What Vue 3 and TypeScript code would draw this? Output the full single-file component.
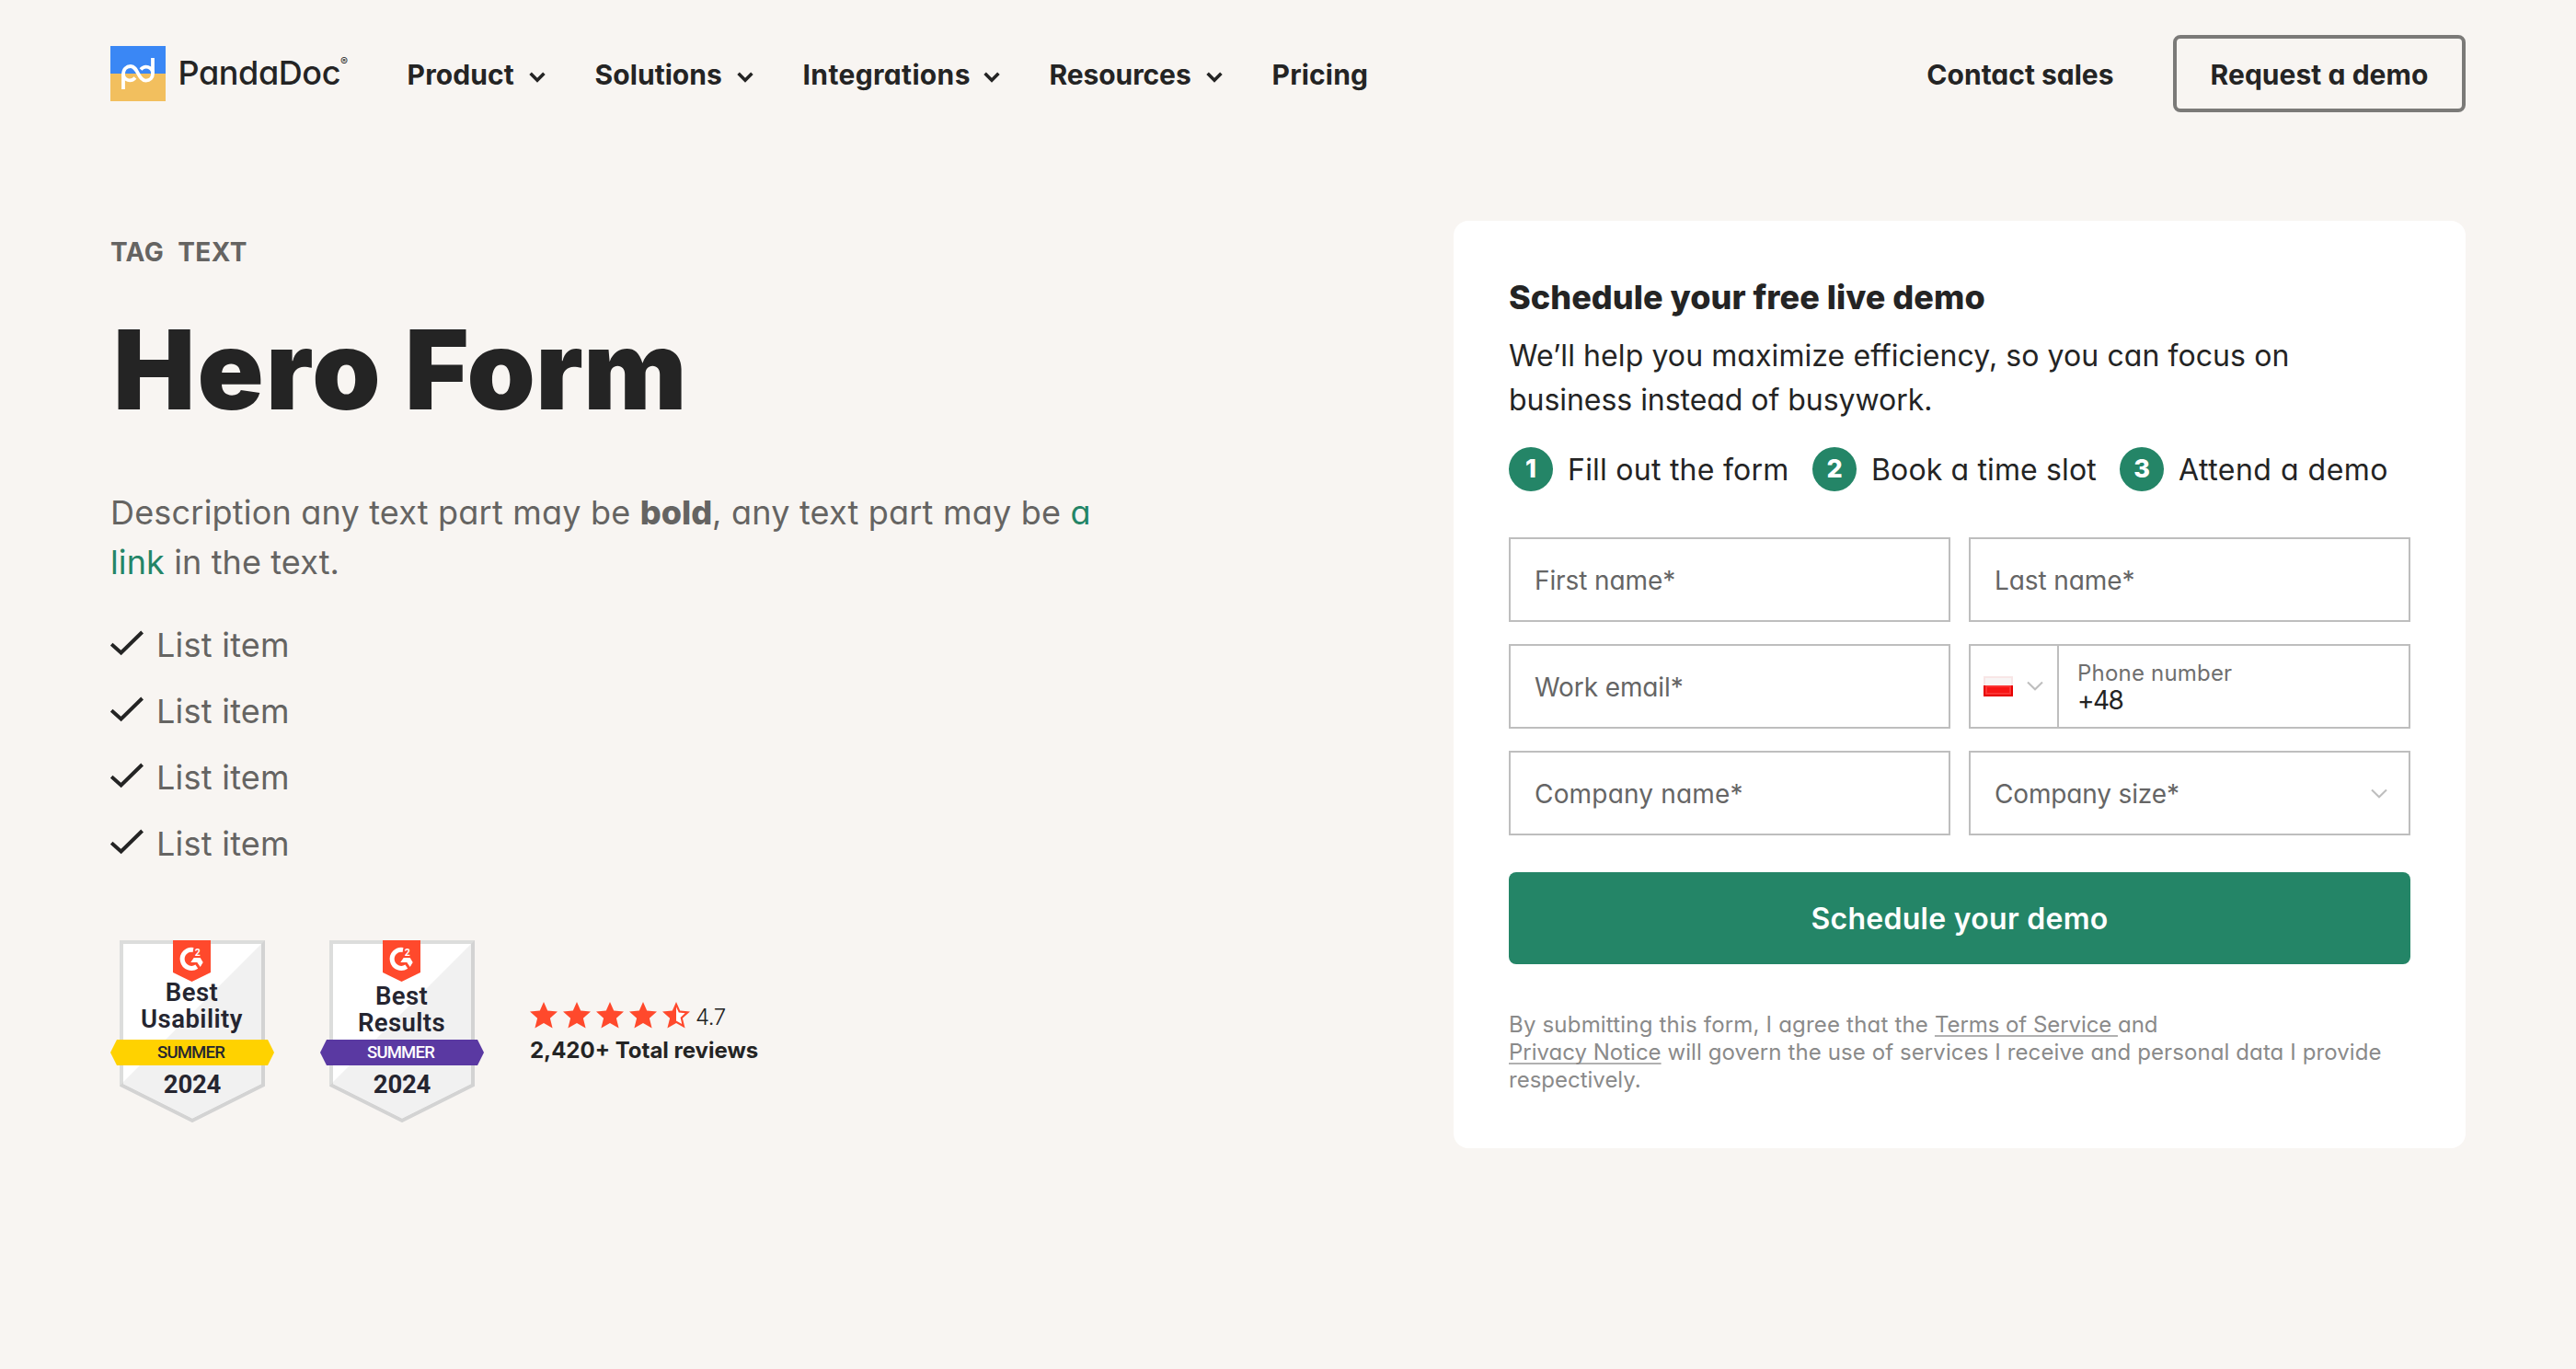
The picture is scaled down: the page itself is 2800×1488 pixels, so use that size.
<script setup lang="ts">
interface NavItem { label: string; width: number; spacing: number; menu: boolean }
interface Badge { lines: [string, string]; firstBaseline: number; ribbon: string; ribbonText: string; spacing: number }
interface Step { text: string; width: number; spacing: number }

const nav: NavItem[] = [
  { label: 'Product', width: 118, spacing: 0.1, menu: true },
  { label: 'Solutions', width: 140, spacing: 0.05, menu: true },
  { label: 'Integrations', width: 182, spacing: 0.35, menu: true },
  { label: 'Resources', width: 156, spacing: -0.1, menu: true },
  { label: 'Pricing', width: 106, spacing: 0.15, menu: false },
]
const listItems: string[] = ['List item', 'List item', 'List item', 'List item']
const badges: Badge[] = [
  { lines: ['Best', 'Usability'], firstBaseline: 66, ribbon: '#ffd200', ribbonText: '#252530', spacing: 0.45 },
  { lines: ['Best', 'Results'], firstBaseline: 70, ribbon: '#5a39a2', ribbonText: '#ffffff', spacing: 0.4 },
]
const steps: Step[] = [
  { text: 'Fill out the form', width: 330, spacing: 0.24 },
  { text: 'Book a time slot', width: 334, spacing: 0.14 },
  { text: 'Attend a demo', width: 300, spacing: 0.5 },
]
const star = 'M15 0L19.2 9.6L30 10.6L21.9 17.8L24.6 28.6L15 23L5.4 28.6L8.1 17.8L0 10.6L10.8 9.6Z'
</script>

<template>
  <div class="page">
    <header class="header">
      <a class="logo">
        <svg width="60" height="60" viewBox="0 0 60 60" fill="none">
          <rect width="60" height="30" fill="#3a87f5" />
          <rect y="30" width="60" height="30" fill="#f2bf5e" />
          <g stroke="#fff" stroke-width="3.8">
            <path d="M14 47V31C14 25 17.6 22 22 22C30 22 30 37.6 38.5 37.6C43 37.6 46 34.6 46 30V13" />
            <path d="M33 25.6C37.5 20.4 45.6 22.6 46 29.5" />
            <path d="M14 30.5C14.4 37.6 22.5 39.4 27 34.4" />
          </g>
        </svg>
        <span class="wordmark">PandaDoc</span><span class="reg">®</span>
      </a>
      <nav class="nav">
        <a v-for="item in nav" :key="item.label" class="nav-item">
          <span class="nav-label" :style="{ width: item.width + 'px', letterSpacing: item.spacing + 'px' }">{{ item.label }}</span>
          <svg v-if="item.menu" class="nav-chevron" width="18" height="12" viewBox="0 0 18 12" fill="none">
            <path d="M1.6 1.8L9 9.2L16.4 1.8" stroke="#242424" stroke-width="3.6" />
          </svg>
        </a>
      </nav>
      <a class="contact">Contact sales</a>
      <a class="request">Request a demo</a>
    </header>

    <main class="hero">
      <section class="intro">
        <p class="tag">TAG TEXT</p>
        <h1 class="title"><span class="title-lead">Hero</span> Form</h1>
        <p class="desc">
          <span class="desc-text">Description any text part may be </span><b>bold</b><span class="desc-text">, any text part may be </span><a class="link">a</a><br />
          <span class="desc-end"><a class="link">link</a> in the text.</span>
        </p>
        <ul class="list">
          <li v-for="(item, i) in listItems" :key="i">
            <svg width="36" height="28" viewBox="0 0 36 28" fill="none">
              <path d="M1.2 15.2L11.6 24.4L34.6 2" stroke="#242424" stroke-width="4" />
            </svg>
            <span>{{ item }}</span>
          </li>
        </ul>
        <div class="proof">
          <svg v-for="badge in badges" :key="badge.lines[1]" class="badge" width="178" height="198" viewBox="0 0 178 198">
            <path d="M10 0H168V158.5L89 198L10 158.5Z" fill="#dcdddc" />
            <path d="M168 0V158.5L89 198L10 158.5L168 0Z" fill="#d3d3d3" />
            <path d="M14 4H164V156L89 193.4L14 156Z" fill="#fff" />
            <path d="M164 4V156L89 193.4L14 156V154Z" fill="#f1f1f1" />
            <path d="M68 0H109V35L88.5 45L68 35Z" fill="#ff492c" />
            <path d="M90 10.5A10 10 0 1 0 93.8 28.6" fill="none" stroke="#fff" stroke-width="5" />
            <path d="M90.7 19H97.7L100.7 24L97.7 29L94.3 24H87.3Z" fill="#fff" />
            <text x="94.8" y="17.2" class="g2">2</text>
            <text x="88.5" :y="badge.firstBaseline" class="badge-name" :letter-spacing="badge.spacing">{{ badge.lines[0] }}</text>
            <text x="88.5" :y="badge.firstBaseline + 28.5" class="badge-name" :letter-spacing="badge.spacing">{{ badge.lines[1] }}</text>
            <path d="M7 108H171L178 122L171 136H7L0 122Z" :fill="badge.ribbon" />
            <text x="87.5" y="128" class="badge-season" :fill="badge.ribbonText">SUMMER</text>
            <text x="89" y="166" class="badge-year">2024</text>
          </svg>
          <div class="reviews">
            <div class="stars">
              <svg v-for="n in 4" :key="n" width="30" height="29" viewBox="0 0 30 29"><path :d="star" fill="#ff492c" /></svg>
              <svg width="30" height="29" viewBox="0 0 30 29">
                <path :d="star" fill="#ff492c" />
                <path d="M15 5.5L17.8 11.6L24.7 12.3L19.6 17L21.2 24.1L15 20.5Z" fill="#fff" />
              </svg>
              <span class="score">4.7</span>
            </div>
            <strong class="total">2,420+ Total reviews</strong>
          </div>
        </div>
      </section>

      <section class="card">
        <h2 class="card-title">Schedule your free live demo</h2>
        <p class="card-text">We’ll help you maximize efficiency, so you can focus on<br /><span class="second">business instead of busywork.</span></p>
        <ol class="steps">
          <li v-for="(step, i) in steps" :key="step.text" :style="{ width: step.width + 'px' }">
            <span class="step-number">{{ i + 1 }}</span>
            <span class="step-text" :style="{ letterSpacing: step.spacing + 'px' }">{{ step.text }}</span>
          </li>
        </ol>
        <form class="form" @submit.prevent>
          <label class="field">First name*</label>
          <label class="field">Last name*</label>
          <label class="field">Work email*</label>
          <div class="phone">
            <div class="country">
              <svg width="32" height="22" viewBox="0 0 32 22">
                <rect width="32" height="22" fill="#f8e6e6" />
                <rect x="2" y="2" width="28" height="8" fill="#f8f5f5" />
                <rect y="10" width="32" height="12" fill="#e60000" />
                <rect x="2" y="10" width="28" height="10" fill="#fb3434" />
                <rect x="4" y="12" width="24" height="6" fill="#f71515" />
              </svg>
              <svg class="chevron" width="18" height="12" viewBox="0 0 18 12" fill="none">
                <path d="M1 1.5L9 9.3L17 1.5" stroke="#bebebe" stroke-width="2" />
              </svg>
            </div>
            <div class="phone-input">
              <span class="phone-label">Phone number</span>
              <span class="phone-value">+48</span>
            </div>
          </div>
          <label class="field wide">Company name*</label>
          <label class="field select">
            <span>Company size*</span>
            <svg width="18" height="12" viewBox="0 0 18 12" fill="none">
              <path d="M1 1.5L9 9.3L17 1.5" stroke="#bebebe" stroke-width="2" />
            </svg>
          </label>
        </form>
        <button class="submit">Schedule your demo</button>
        <p class="legal">
          <span class="l1">By submitting this form, I agree that the </span><a class="terms">Terms of Service </a>and<br />
          <a>Privacy Notice</a><span class="l2"> will govern the use of services I receive and personal data I provide</span><br />
          respectively.
        </p>
      </section>
    </main>
  </div>
</template>

<style>
body { background: #f8f5f2; }
</style>

<style scoped>
.page {
  min-height: 1488px;
  background: #f8f5f2;
  color: #242424;
  font-family: Inter, "Liberation Sans", sans-serif;
  font-feature-settings: "cv11" 1;
}
.page *, .page { box-sizing: border-box; }
p, h1, h2, ul, ol { margin: 0; padding: 0; list-style: none; }

.header {
  display: flex;
  align-items: center;
  height: 160px;
  padding: 0 120px;
  font-size: 30px;
  font-weight: 700;
  line-height: 36px;
  white-space: nowrap;
}
.logo { display: flex; align-items: center; width: 322px; }
.wordmark { margin-left: 13.5px; width: 176.5px; font-size: 36px; font-weight: 550; letter-spacing: -0.4px; line-height: 60px; padding-bottom: 3px; }
.reg { font-size: 12px; font-weight: 400; line-height: 14px; margin-bottom: 27px; }
.nav { display: flex; gap: 53px; padding-top: 2px; }
.nav-item { display: flex; align-items: center; }
.nav-label { padding-left: 0.6px; }
.nav-chevron { margin: 5px 0 0 15px; }
.contact { margin-left: auto; padding-top: 2px; letter-spacing: 0; }
.request {
  display: flex;
  align-items: center;
  justify-content: center;
  width: 318px;
  height: 84px;
  margin-left: 64.5px;
  padding-top: 2px;
  border: 4px solid #7b7a78;
  border-radius: 8px;
  letter-spacing: 0.05px;
}

.hero { display: flex; justify-content: space-between; align-items: flex-start; padding: 0 120px; }
.intro { width: 1100px; padding-top: 98px; color: #656462; }
.tag { font-size: 28px; font-weight: 700; line-height: 32px; letter-spacing: 0.4px; word-spacing: 8px; }
.title { margin: 52px 0 0 3px; font-size: 119px; font-weight: 900; line-height: 120px; letter-spacing: 0.4px; color: #242424; }
.title-lead { letter-spacing: 2.3px; }
.desc { margin-top: 68px; font-size: 36px; line-height: 54px; white-space: nowrap; }
.desc-text { letter-spacing: 0.2px; }
.desc-end { letter-spacing: 0.12px; }
.desc b { font-weight: 800; }
.link { color: #248567; }
.list { margin-top: 26px; }
.list li { display: flex; align-items: center; height: 72px; font-size: 36px; line-height: 72px; letter-spacing: 0.25px; }
.list li span { padding-top: 1px; }
.list svg { margin: -3px 14px 0 0; }

.proof { display: flex; margin-top: 70px; }
.badge { margin-right: 50px; font-family: Roboto, sans-serif; font-feature-settings: normal; text-anchor: middle; fill: #252530; }
.badge-name { font-size: 27.5px; font-weight: 600; }
.badge-season { font-size: 18.5px; font-weight: 500; letter-spacing: -0.8px; }
.badge-year { font-size: 27.5px; font-weight: 700; letter-spacing: -0.2px; }
.g2 { font-size: 10.5px; font-weight: 700; fill: #fff; }
.reviews { display: flex; flex-direction: column; padding-top: 66px; color: #242424; font-feature-settings: normal; }
.stars { display: flex; align-items: center; gap: 6px; height: 30px; }
.score { padding-top: 5px; font-size: 24px; font-weight: 350; line-height: 30px; letter-spacing: -0.5px; }
.total { margin-top: 9px; font-size: 24px; font-weight: 700; line-height: 30px; }

.card { width: 1100px; height: 1008px; margin-top: 80px; padding: 61px 60px 60px; border-radius: 16px; background: #fff; }
.card-title { font-size: 36px; font-weight: 800; line-height: 44px; letter-spacing: 0.04px; }
.card-text { margin-top: 18px; font-size: 32px; line-height: 48px; letter-spacing: 0.08px; }
.second { letter-spacing: -0.04px; }
.steps { display: flex; margin-top: 27px; font-size: 32px; line-height: 48px; white-space: nowrap; }
.steps li { display: flex; flex: none; gap: 16px; }
.step-text { padding-top: 1px; height: 48px; }
.step-number {
  width: 48px;
  height: 48px;
  border-radius: 50%;
  background: #248567;
  color: #fff;
  font-size: 27px;
  font-weight: 800;
  line-height: 47px;
  text-align: center;
}
.form { display: grid; grid-template-columns: 480px 480px; grid-auto-rows: 92px; gap: 24px 20px; margin-top: 50px; font-size: 28px; }
.field { display: flex; align-items: center; padding: 2px 26px 0; border: 2px solid #bebebe; color: #656565; letter-spacing: -0.1px; }
.wide { letter-spacing: 0.18px; }
.select { justify-content: space-between; padding-right: 23px; letter-spacing: -0.15px; }
.select svg { margin-top: -1px; }
.phone { display: flex; border: 2px solid #bebebe; }
.country { display: flex; align-items: center; width: 96px; padding-left: 14px; border-right: 2px solid #bebebe; }
.chevron { margin-left: 15px; }
.phone-input { display: flex; flex-direction: column; padding: 16px 0 0 20px; }
.phone-label { font-size: 24px; line-height: 28px; letter-spacing: 0.2px; color: #6f6f6f; }
.phone-value { line-height: 30px; letter-spacing: -1.5px; }
.submit {
  display: block;
  width: 980px;
  height: 100px;
  margin-top: 40px;
  padding: 0;
  border: 0;
  border-radius: 8px;
  background: #248567;
  color: #fff;
  font: 600 32px/102px Inter, sans-serif;
  font-feature-settings: "cv11" 1;
  letter-spacing: 0.28px;
}
.legal { margin-top: 51px; font-size: 24px; line-height: 30px; color: #8a8a8a; white-space: nowrap; }
.legal a { text-decoration: underline; text-decoration-color: #b0b0b0; text-decoration-thickness: 2px; text-underline-offset: 3px; text-decoration-skip-ink: none; }
.legal .terms { letter-spacing: -0.06px; }
.l1 { letter-spacing: 0.19px; }
.l2 { letter-spacing: 0.1px; }
</style>
